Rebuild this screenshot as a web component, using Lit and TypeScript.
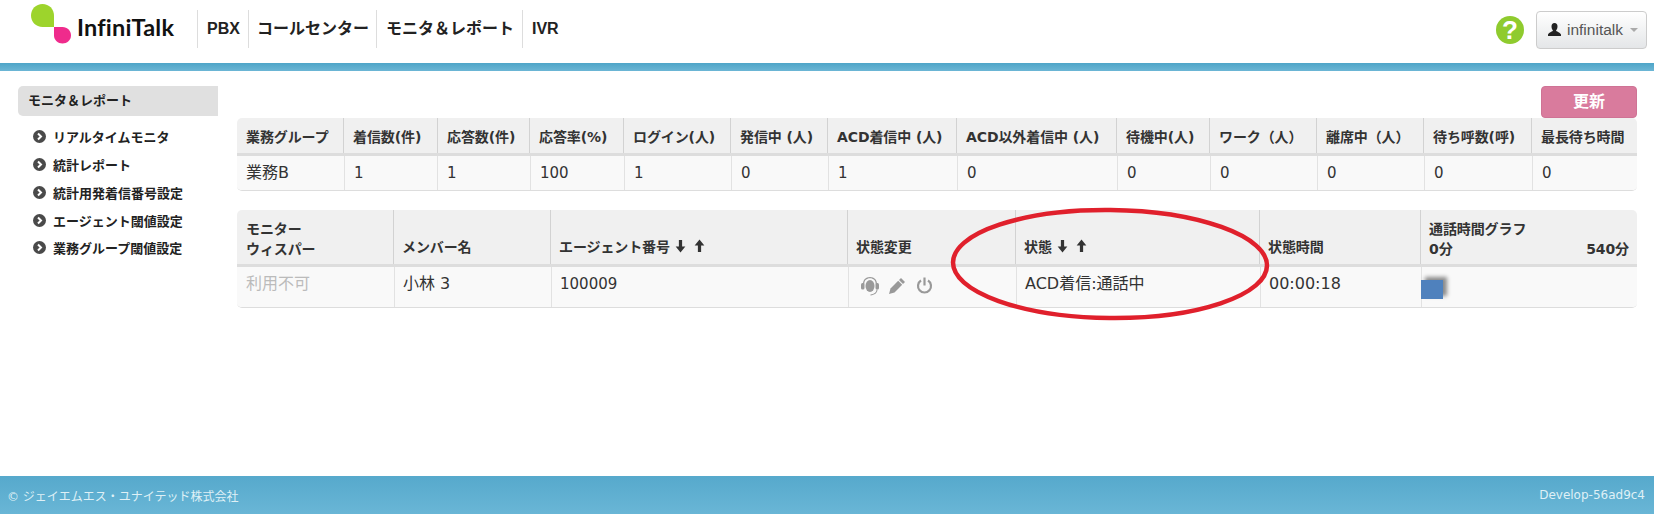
import { LitElement, html, css, svg } from "lit";
import { customElement } from "lit/decorators.js";

const arrows = html`<span class="arrows">
  <svg width="11" height="14" viewBox="0 0 10 13"><path d="M3.500 1h3v6h3L5 12.500.5 7h3z" /></svg>
  <svg width="11" height="14" viewBox="0 0 10 13"><path d="M3.500 12h3V6h3L5 .5.5 6h3z" /></svg>
</span>`;

const summaryHead = ["業務グループ", "着信数(件)", "応答数(件)", "応答率(%)", "ログイン(人)", "発信中 (人)", "ACD着信中 (人)", "ACD以外着信中 (人)", "待機中(人)", "ワーク（人）", "離席中（人）", "待ち呼数(呼)", "最長待ち時間"];
const summaryBody = ["1", "1", "100", "1", "0", "1", "0", "0", "0", "0", "0", "0"];
const menu = ["リアルタイムモニタ", "統計レポート", "統計用発着信番号設定", "エージェント閾値設定", "業務グループ閾値設定"];

@customElement("app-root")
export class AppRoot extends LitElement {
  static styles = css`
    :host { display: block; position: relative; width: 1654px; height: 518px; overflow: hidden; background: #fff; color: #333; font-family: "Liberation Sans", "Noto Sans CJK JP", sans-serif; }
    .page { display: flex; flex-direction: column; height: 514px; }
    header { height: 63px; display: flex; align-items: flex-start; flex: none; }
    .logo { display: flex; width: 197px; flex: none; height: 63px; }
    .logo svg { margin: 4px 0 0 31px; flex: none; }
    .logo span { font: 700 23.5px/1 Lato, sans-serif; color: #111; margin: 16px 0 0 6px; letter-spacing: .2px; }
    nav { display: flex; margin-top: 10px; }
    nav a { height: 38px; line-height: 37px; padding: 0 8px 0 9px; border-left: 1px solid #ddd; font-size: 16px; font-weight: 700; color: #222; }
    nav a:nth-child(2) { padding: 0 7px 0 8px; }
    .right { margin-left: auto; display: flex; align-items: center; margin-top: 11px; margin-right: 7px; gap: 12px; }
    .help { width: 28px; height: 28px; border-radius: 50%; background: #8fcb2e; color: #fff; font: 700 26px/28px "Liberation Sans", sans-serif; text-align: center; }
    .user { width: 111px; height: 38px; box-sizing: border-box; border: 1px solid #ccc; border-radius: 4px; background: linear-gradient(#fff, #e4e6e8); display: flex; align-items: center; padding-left: 11px; gap: 6px; font-size: 15.5px; color: #555; }
    .user svg.p { fill: #222; margin-bottom: 2px; }
    .caret { width: 0; height: 0; border: 4px solid transparent; border-top-color: #aaa; border-bottom: 0; margin-left: 1px; }
    .band { height: 8px; flex: none; background: linear-gradient(#4ea5c8, #6cb6d5); }
    main { flex: 1; display: flex; padding: 15px 17px 0 18px; }
    aside { width: 200px; flex: none; margin-right: 19px; }
    .active { height: 30px; line-height: 29px; background: #e0e0e0; border-radius: 5px 0 0 5px; padding-left: 10px; font-size: 13px; font-weight: 700; color: #222; }
    ul { list-style: none; margin: 7px 0 0; padding: 0 0 0 15px; }
    li { height: 27.75px; display: flex; align-items: center; gap: 7px; font-size: 13px; font-weight: 700; color: #222; }
    li svg { flex: none; }
    .content { flex: 1; display: flex; flex-direction: column; min-width: 0; }
    .update { align-self: flex-end; width: 96px; height: 32px; border-radius: 4px; background: #d97b9d; border: 1px solid #cf7395; box-sizing: border-box; color: #fff; font-size: 16px; font-weight: 700; text-align: center; line-height: 30px; }
    .table { border-radius: 5px; overflow: hidden; border-bottom: 1px solid #ddd; box-sizing: border-box; }
    .row { display: grid; }
    .t1 .h { grid-template-columns: 106px 94px 92px 94px 107px 97px 129px 160px 93px 107px 107px 108px 106px; height: 38px; }
    .t1 .b { grid-template-columns: 107px 93px 93px 94px 107px 97px 129px 160px 93px 107px 107px 108px 105px; height: 34px; }
    .t2 { margin-top: 19px; }
    .t2 .h { grid-template-columns: 156px 157px 297px 168px 244px 161px 218px; height: 57px; }
    .t2 .b { grid-template-columns: 157px 157px 297px 168px 244px 161px 217px; height: 40px; }
    .h { background: #f0f0f0; border-bottom: 3px solid #ddd; box-sizing: border-box; }
    .h > div { border-left: 1px solid #d2d2d2; padding: 0 0 0 9px; font-family: "DejaVu Sans", "Noto Sans CJK JP", sans-serif; font-size: 14px; letter-spacing: -.1px; font-weight: 700; color: #333; white-space: nowrap; display: flex; align-items: center; min-width: 0; }
    .t2 .h > div { display: block; line-height: 20px; padding: 27px 0 0 8px; box-sizing: border-box; }
    .t2 .h > div.two { padding-top: 9px; }
    .h > div:first-child, .b > div:first-child { border-left: 0; }
    .t2 .h > div:first-child { padding-left: 9px; }
    .b { background: #f9f9f9; }
    .b > div { border-left: 1px solid #e2e2e2; padding: 0 0 0 9px; font-family: "DejaVu Sans", "Noto Sans CJK JP", sans-serif; font-size: 16px; color: #333; white-space: nowrap; min-width: 0; line-height: 34px; }
    .t2 .b > div { padding-left: 8px; }
    .t2 .b > div:first-child { padding-left: 9px; }
    .b > div.num { font-size: 15px; }
    .muted { color: #bbb !important; }
    .arrows { display: inline-flex; gap: 8px; margin-left: 5px; vertical-align: -1px; }
    .arrows svg { fill: #333; }
    .scale { display: flex; justify-content: space-between; padding-right: 9px; }
    .icons { display: flex; align-items: center; gap: 10px; height: 40px; padding-bottom: 3px; box-sizing: border-box; margin-left: 4px; }
    .icons svg { flex: none; }
    .power { margin-left: 1px; }
    .t2 .b > div.graph { padding: 13px 0 0 0; box-sizing: border-box; }
    .bar { width: 22px; height: 19px; background: #4f81bd; box-shadow: 4px -3px 4px #8a8a8a; margin-left: -1px; }
    footer { height: 38px; flex: none; margin-top: auto; background: linear-gradient(#56a9cc, #69b6d6); display: flex; justify-content: space-between; align-items: center; padding: 0 9px 0 7px; font-family: "DejaVu Sans", "Noto Sans CJK JP", sans-serif; font-size: 12px; color: #dff0f6; }
    .ring { position: absolute; left: 945px; top: 202px; pointer-events: none; }
  `;

  render() {
    return html`
      <div class="page">
        <header>
          <div class="logo">
            <svg width="40" height="40" viewBox="0 0 40 40">
              <path d="M11.500 0C18 0 23 5 23 11.500V23H11.500C5 23 0 18 0 11.500S5 0 11.500 0z" fill="#9dd42c" />
              <path d="M23 23H31.500C36.500 23 40 27 40 31.500S36 39.500 31.500 39.500S23 36 23 31.500z" fill="#ef2b8c" />
            </svg>
            <span>InfiniTalk</span>
          </div>
          <nav>
            <a>PBX</a><a>コールセンター</a><a>モニタ＆レポート</a><a>IVR</a>
          </nav>
          <div class="right">
            <div class="help">?</div>
            <div class="user">
              <svg class="p" width="13" height="13" viewBox="0 0 13 13"><path d="M6.500 0C8.500 0 9.500 1.500 9.500 3.500S8.700 6.500 8 7.500C8 8.500 12 9 13 11.500V13H0V11.500C1 9 5 8.500 5 7.500C4.300 6.500 3.500 5.500 3.500 3.500S4.500 0 6.500 0z" /></svg>
              <span>infinitalk</span><i class="caret"></i>
            </div>
          </div>
        </header>
        <div class="band"></div>
        <main>
          <aside>
            <div class="active">モニタ＆レポート</div>
            <ul>
              ${menu.map((m) => html`<li>
                <svg width="13" height="13" viewBox="0 0 13 13"><circle cx="6.500" cy="6.500" r="6.500" fill="#4a4a4a" /><path d="M5 3.500L8 6.500L5 9.500" fill="none" stroke="#fff" stroke-width="2" /></svg>
                ${m}
              </li>`)}
            </ul>
          </aside>
          <div class="content">
            <div class="update">更新</div>
            <div class="table t1">
              <div class="row h">${summaryHead.map((c) => html`<div>${c}</div>`)}</div>
              <div class="row b"><div>業務B</div>${summaryBody.map((c) => html`<div class="num">${c}</div>`)}</div>
            </div>
            <div class="table t2">
              <div class="row h">
                <div class="two">モニター<br />ウィスパー</div>
                <div>メンバー名</div>
                <div>エージェント番号${arrows}</div>
                <div>状態変更</div>
                <div>状態${arrows}</div>
                <div>状態時間</div>
                <div class="two">通話時間グラフ<div class="scale"><span>0分</span><span>540分</span></div></div>
              </div>
              <div class="row b">
                <div class="muted">利用不可</div>
                <div>小林 3</div>
                <div class="num">100009</div>
                <div>
                  <div class="icons">
                    <svg width="18" height="20" viewBox="0 0 18 20" fill="#999">
                      <path d="M9 1C4.500 1 2 4 2 8H3.300C3.300 4.500 5.500 2.300 9 2.300S14.700 4.500 14.700 8H16C16 4 13.500 1 9 1z" />
                      <rect x="0" y="7" width="3.500" height="6.500" rx="1.500" />
                      <rect x="14.500" y="7" width="3.500" height="6.500" rx="1.500" />
                      <ellipse cx="9" cy="10" rx="4.500" ry="6" />
                      <path d="M15.500 13.500C15.500 16.500 13 18 9.500 18.500V19.500C13.500 19 16.500 17 16.500 13.500z" />
                    </svg>
                    <svg width="16" height="16" viewBox="0 0 16 16" fill="#999">
                      <path d="M12 0L16 4L14 6L10 2z" />
                      <path d="M9.200 2.800L13.200 6.800L5.500 14.500L0 16L1.500 10.500z" />
                    </svg>
                    <svg class="power" width="17" height="17" viewBox="0 0 17 17" fill="none" stroke="#999" stroke-width="2.200">
                      <path d="M5 3.500A6.500 6.500 0 1 0 12 3.500" />
                      <path d="M8.500 .5V8.500" />
                    </svg>
                  </div>
                </div>
                <div>ACD着信:通話中</div>
                <div>00:00:18</div>
                <div class="graph"><div class="bar"></div></div>
              </div>
            </div>
          </div>
        </main>
        <footer><span>© ジェイエムエス・ユナイテッド株式会社</span><span>Develop-56ad9c4</span></footer>
      </div>
      <svg class="ring" width="330" height="125" viewBox="0 0 330 125" fill="none">
        ${svg`<ellipse cx="165" cy="62" rx="157" ry="54" stroke="#e0202c" stroke-width="4.500" transform="rotate(0.6 165 62)" />`}
      </svg>
    `;
  }
}
